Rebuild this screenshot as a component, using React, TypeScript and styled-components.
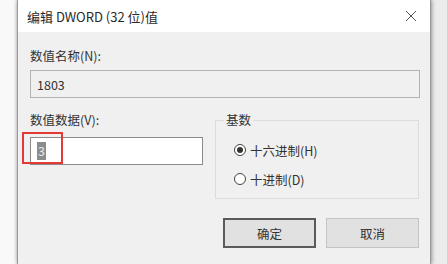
import styled, { createGlobalStyle } from "styled-components";

const GlobalStyle = createGlobalStyle`
  html, body {
    margin: 0;
    padding: 0;
    background: #f7f7f7;
  }
  body {
    font-family: "Noto Sans CJK SC", "Noto Sans", "Liberation Sans", sans-serif;
    color: #333333;
    overflow: hidden;
  }
`;

const Page = styled.div`
  width: 447px;
  height: 264px;
  display: flex;
  background: linear-gradient(to right, #f9f9f9 0, #f9f9f9 430px, #ececec 430px);
`;

const Dialog = styled.div`
  margin-left: 17px;
  width: 412px;
  height: 264px;
  border-left: 1px solid #9a9a9a;
  border-right: 1px solid #9a9a9a;
  box-shadow: 1px 0 4px rgba(0, 0, 0, 0.35), -1px 0 3px rgba(0, 0, 0, 0.15);
  display: flex;
  flex-direction: column;
  background: #f0f0f0;
`;

const TitleBar = styled.div`
  height: 32px;
  flex-shrink: 0;
  background: #ffffff;
  display: flex;
  align-items: center;
  justify-content: space-between;
  padding: 0 10px 0 9px;
`;

const Title = styled.span`
  font-size: 13px;
  color: #2a2a2a;
`;

const CloseButton = styled.div`
  width: 14px;
  height: 14px;
  display: flex;
  align-items: center;
  justify-content: center;
  margin-right: 2px;
`;

const Body = styled.div`
  padding: 16px 10px 0 12px;
  display: flex;
  flex-direction: column;
`;

const Label = styled.div`
  font-size: 12.5px;
  line-height: 16px;
  height: 16px;
  color: #333333;
`;

const TextBox = styled.div<{ $readOnly?: boolean }>`
  box-sizing: border-box;
  height: 28px;
  margin-top: ${(p) => (p.$readOnly ? "6px" : "9px")};
  border: 1px solid ${(p) => (p.$readOnly ? "#b4b4b4" : "#8a8a8a")};
  background: ${(p) => (p.$readOnly ? "#f0f0f0" : "#ffffff")};
  display: flex;
  align-items: center;
  padding-left: 6px;
  font-size: 12.5px;
  color: #333333;
  position: relative;
`;

const Selected = styled.span`
  background: #8c8c8c;
  color: #e8e8e8;
  padding: 0 1px;
  line-height: 18px;
`;

const Highlight = styled.div`
  position: absolute;
  left: -9px;
  top: -6px;
  width: 41px;
  height: 32px;
  box-sizing: border-box;
  border: 2px solid #e53935;
`;

const Row = styled.div`
  display: grid;
  grid-template-columns: 173px 204px;
  column-gap: 12px;
  margin-top: 14px;
`;

const Column = styled.div`
  display: flex;
  flex-direction: column;
`;

const GroupBox = styled.fieldset`
  margin: 0;
  padding: 0 0 0 8px;
  height: 87px;
  box-sizing: border-box;
  border: 1px solid #dcdcdc;
  min-width: 0;
`;

const Legend = styled.legend`
  padding: 0 2px;
  font-size: 12.5px;
  line-height: 16px;
  color: #333333;
`;

const RadioList = styled.div`
  display: flex;
  flex-direction: column;
  gap: 9px;
  margin-top: 12px;
  padding-left: 10px;
`;

const RadioRow = styled.div`
  display: flex;
  align-items: center;
  height: 20px;
  gap: 4px;
  font-size: 12.5px;
  color: #333333;
`;

const RadioCircle = styled.span<{ $checked?: boolean }>`
  box-sizing: border-box;
  width: 12px;
  height: 12px;
  border-radius: 50%;
  border: 1px solid #444444;
  background: #ffffff;
  display: flex;
  align-items: center;
  justify-content: center;

  &::after {
    content: "";
    width: 6px;
    height: 6px;
    border-radius: 50%;
    background: ${(p) => (p.$checked ? "#333333" : "transparent")};
  }
`;

const ButtonRow = styled.div`
  display: flex;
  justify-content: flex-end;
  gap: 10px;
  margin-top: 19px;
  padding-right: 1px;
`;

const Button = styled.div<{ $default?: boolean }>`
  box-sizing: border-box;
  width: 93px;
  height: 30px;
  background: #e1e1e1;
  border: ${(p) => (p.$default ? "2px solid #5a5a5a" : "1px solid #c4c4c4")};
  display: flex;
  align-items: center;
  justify-content: center;
  font-size: 12.5px;
  color: #333333;
`;

export default function App() {
  return (
    <>
      <GlobalStyle />
      <Page>
        <Dialog>
          <TitleBar>
            <Title>编辑 DWORD (32 位)值</Title>
            <CloseButton>
              <svg width="12" height="12" viewBox="0 0 12 12">
                <path d="M1 1 L11 11 M11 1 L1 11" stroke="#555" strokeWidth="1" fill="none" />
              </svg>
            </CloseButton>
          </TitleBar>
          <Body>
            <Label>数值名称(N):</Label>
            <TextBox $readOnly>1803</TextBox>
            <Row>
              <Column>
                <Label>数值数据(V):</Label>
                <TextBox>
                  <Selected>3</Selected>
                  <Highlight />
                </TextBox>
              </Column>
              <GroupBox>
                <Legend>基数</Legend>
                <RadioList>
                  <RadioRow>
                    <RadioCircle $checked />
                    十六进制(H)
                  </RadioRow>
                  <RadioRow>
                    <RadioCircle />
                    十进制(D)
                  </RadioRow>
                </RadioList>
              </GroupBox>
            </Row>
            <ButtonRow>
              <Button $default>确定</Button>
              <Button>取消</Button>
            </ButtonRow>
          </Body>
        </Dialog>
      </Page>
    </>
  );
}
